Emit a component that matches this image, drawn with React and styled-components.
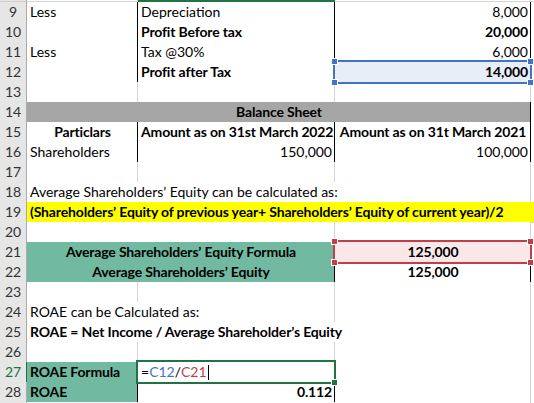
import React from "react";
import styled, { createGlobalStyle } from "styled-components";

const GRID = "#d4d4d4";
const BLACK = "#000";
const TEAL = "#72b9a1";
const GREEN = "#217346";
const BLUE = "#4472c4";
const RED = "#c0404a";

const Global = createGlobalStyle`
  html, body { margin: 0; padding: 0; background: #fff; }
  body { overflow: hidden; }
  #root { width: 534px; height: 403px; overflow: hidden; }
`;

const Sheet = styled.div`
  display: flex;
  flex-direction: column;
  width: 534px;
  font-family: Lato, "Liberation Sans", sans-serif;
  font-size: 14px;
  color: #000;
`;

const Row = styled.div`
  display: grid;
  grid-template-columns: 27px 111px 197px 196px 1fr;
  height: ${(p) => (p.$h ? p.$h : 20)}px;
`;

const Head = styled.div`
  box-sizing: border-box;
  background: #e6e6e6;
  border-right: 1px solid ${(p) => (p.$active ? GREEN : "#ababab")};
  border-bottom: 1px solid #cdcdcd;
  color: ${(p) => (p.$active ? GREEN : "#333")};
  text-align: center;
  line-height: 20px;
  font-size: 14px;
`;

const Cell = styled.div`
  grid-column: span ${(p) => p.$span || 1};
  position: relative;
  box-sizing: border-box;
  border-right: 1px solid ${(p) => p.$r || GRID};
  border-bottom: 1px solid ${(p) => p.$b || GRID};
  background: ${(p) => p.$bg || "#fff"};
  font-weight: ${(p) => (p.$bold ? 700 : 400)};
  letter-spacing: ${(p) => (p.$bold ? "-0.15px" : "0")};
  text-align: ${(p) => p.$align || "left"};
  padding: 0 2px 0 3px;
  line-height: 20px;
  white-space: nowrap;
`;

const EdgeCell = styled.div`
  grid-column: span ${(p) => p.$span || 1};
  box-sizing: border-box;
  background: ${(p) => p.$bg || "#fff"};
  border-bottom: 1px solid ${(p) => p.$b || GRID};
  border-right: 1px solid ${(p) => p.$r || GRID};
`;

const SelBox = styled.div`
  position: absolute;
  left: -2px;
  right: -2px;
  top: -2px;
  bottom: -2px;
  border: 2px solid ${(p) => p.$color};
  pointer-events: none;
  z-index: 2;
`;

const Handle = styled.span`
  position: absolute;
  width: 5px;
  height: 5px;
  background: ${(p) => p.$color};
  border: 1px solid #fff;
  ${(p) => (p.$top ? "top: -4px;" : "bottom: -4px;")}
  ${(p) => (p.$left ? "left: -4px;" : "right: -4px;")}
`;

const Token = styled.span`
  color: ${(p) => p.$color || "#000"};
`;

const Caret = styled.span`
  display: inline-block;
  width: 1px;
  height: 15px;
  background: #000;
  vertical-align: -3px;
  margin-left: 1px;
`;

function RangeBox({ color, handles = true, fill = false }) {
  return (
    <SelBox $color={color}>
      {handles && (
        <>
          <Handle $color={color} $top $left />
          <Handle $color={color} $top />
          <Handle $color={color} $left />
          <Handle $color={color} />
        </>
      )}
      {fill && <Handle $color={color} />}
    </SelBox>
  );
}

const E = () => <EdgeCell $r="transparent" />;

export default function App() {
  return (
    <>
      <Global />
      <Sheet>
        <Row $h={2}>
          <EdgeCell $bg="#e6e6e6" $r="#ababab" $b="#cdcdcd" />
          <EdgeCell />
          <EdgeCell $bg={GREEN} $b={GREEN} $r={GREEN} />
          <EdgeCell />
          <E />
        </Row>

        <Row>
          <Head>9</Head>
          <Cell $r={BLACK} $b={BLACK}>Less</Cell>
          <Cell $r={BLACK} $b={BLACK}>Depreciation</Cell>
          <Cell $r={BLACK} $b={BLACK} $align="right">8,000</Cell>
          <E />
        </Row>
        <Row>
          <Head>10</Head>
          <Cell $r={BLACK} $b={BLACK} />
          <Cell $r={BLACK} $b={BLACK} $bold>Profit Before tax</Cell>
          <Cell $r={BLACK} $b={BLACK} $align="right" $bold>20,000</Cell>
          <E />
        </Row>
        <Row>
          <Head>11</Head>
          <Cell $r={BLACK} $b={BLACK}>Less</Cell>
          <Cell $r={BLACK} $b={BLACK}>Tax @30%</Cell>
          <Cell $r={BLACK} $b={BLACK} $align="right">6,000</Cell>
          <E />
        </Row>
        <Row>
          <Head>12</Head>
          <Cell $r={BLACK} $b={BLACK} />
          <Cell $r={BLACK} $b={BLACK} $bold>Profit after Tax</Cell>
          <Cell $r={BLACK} $b={BLACK} $align="right" $bold $bg="#e8eef8">
            14,000
            <RangeBox color={BLUE} />
          </Cell>
          <E />
        </Row>
        <Row>
          <Head>13</Head>
          <Cell $b={BLACK} />
          <Cell $b={BLACK} />
          <Cell $b={BLACK} />
          <E />
        </Row>
        <Row>
          <Head>14</Head>
          <Cell $span={3} $r={BLACK} $b={BLACK} $bg="#a6a6a6" $bold $align="center">
            Balance Sheet
          </Cell>
          <E />
        </Row>
        <Row>
          <Head>15</Head>
          <Cell $r={BLACK} $b={BLACK} $bold $align="center">Particlars</Cell>
          <Cell $r={BLACK} $b={BLACK} $bold $align="center">Amount as on 31st March 2022</Cell>
          <Cell $r={BLACK} $b={BLACK} $bold $align="center">Amount as on 31t March 2021</Cell>
          <E />
        </Row>
        <Row>
          <Head>16</Head>
          <Cell $r={BLACK} $b={BLACK}>Shareholders</Cell>
          <Cell $r={BLACK} $b={BLACK} $align="right">150,000</Cell>
          <Cell $r={BLACK} $b={BLACK} $align="right">100,000</Cell>
          <E />
        </Row>
        <Row>
          <Head>17</Head>
          <Cell />
          <Cell />
          <Cell />
          <E />
        </Row>
        <Row>
          <Head>18</Head>
          <Cell $span={3}>Average Shareholders’ Equity can be calculated as:</Cell>
          <E />
        </Row>
        <Row>
          <Head>19</Head>
          <Cell $span={4} $bg="#ffff00" $bold $r="transparent">
            (Shareholders’ Equity of previous year+ Shareholders’ Equity of current year)/2
          </Cell>
        </Row>
        <Row>
          <Head>20</Head>
          <Cell $span={2} $b={BLACK} />
          <Cell $b={BLACK} />
          <E />
        </Row>
        <Row>
          <Head>21</Head>
          <Cell $span={2} $r={BLACK} $b={BLACK} $bg={TEAL} $bold $align="center">
            Average Shareholders’ Equity Formula
          </Cell>
          <Cell $r={BLACK} $b={BLACK} $bg="#fae8e9" $bold $align="center">
            125,000
            <RangeBox color={RED} />
          </Cell>
          <E />
        </Row>
        <Row>
          <Head>22</Head>
          <Cell $span={2} $r={BLACK} $b={BLACK} $bg={TEAL} $bold $align="center">
            Average Shareholders’ Equity
          </Cell>
          <Cell $r={BLACK} $b={BLACK} $bold $align="center">125,000</Cell>
          <E />
        </Row>
        <Row>
          <Head>23</Head>
          <Cell />
          <Cell />
          <Cell />
          <E />
        </Row>
        <Row>
          <Head>24</Head>
          <Cell $span={2}>ROAE can be Calculated as:</Cell>
          <Cell />
          <E />
        </Row>
        <Row>
          <Head>25</Head>
          <Cell $span={3} $bold>ROAE = Net Income / Average Shareholder’s Equity</Cell>
          <E />
        </Row>
        <Row>
          <Head>26</Head>
          <Cell />
          <Cell />
          <Cell />
          <E />
        </Row>
        <Row>
          <Head $active>27</Head>
          <Cell $r={BLACK} $b={BLACK} $bg={TEAL} $bold>ROAE Formula</Cell>
          <Cell $r={BLACK} $b={BLACK}>
            <Token>=</Token>
            <Token $color={BLUE}>C12</Token>
            <Token>/</Token>
            <Token $color={RED}>C21</Token>
            <Caret />
            <RangeBox color={GREEN} handles={false} fill />
          </Cell>
          <Cell />
          <E />
        </Row>
        <Row>
          <Head>28</Head>
          <Cell $r={BLACK} $b={BLACK} $bg={TEAL} $bold>ROAE</Cell>
          <Cell $r={BLACK} $b={BLACK} $bold $align="right">0.112</Cell>
          <Cell />
          <E />
        </Row>
        <Row>
          <Head />
          <Cell />
          <Cell />
          <Cell />
          <E />
        </Row>
      </Sheet>
    </>
  );
}
